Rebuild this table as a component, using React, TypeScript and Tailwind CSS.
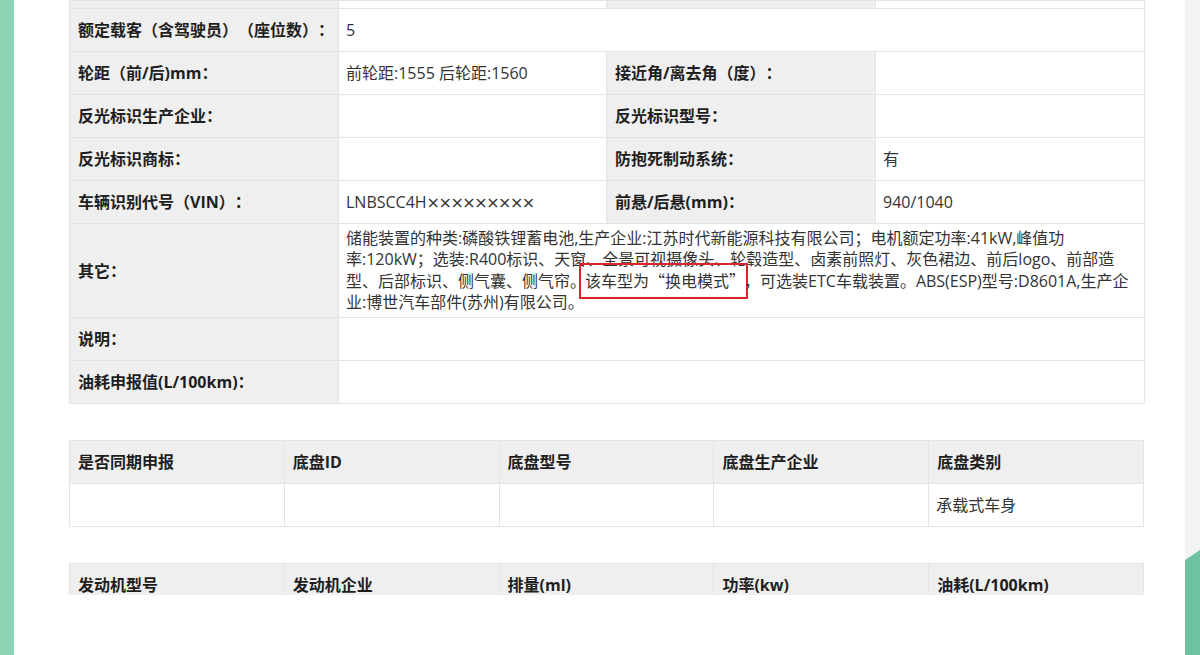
import React from "react";

const font = "font-['Open_Sans','Noto_Sans_CJK_SC',sans-serif]";
const cjk = "font-['Noto_Sans_CJK_SC',sans-serif]";

const labelCls =
  "bg-[#efefef] border border-[#e4e4e4] px-[8px] text-[16px] font-bold text-[#1e1e1e] align-middle whitespace-nowrap overflow-visible";
const valueCls = "bg-white border border-[#e4e4e4] px-[7px] text-[16px] text-[#333] align-middle whitespace-nowrap";

const Label = ({ children }: { children?: React.ReactNode }) => <td className={labelCls}>{children}</td>;
const Value = ({ children, span }: { children?: React.ReactNode; span?: number }) => (
  <td className={valueCls} colSpan={span}>
    {children}
  </td>
);

const Times = () => <span className="font-['DejaVu_Sans',sans-serif] tracking-[-1.5px]">×××××××××</span>;

const Other = () => (
  <div className="py-[4px] leading-[21px]">
    <div>储能装置的种类:磷酸铁锂蓄电池,生产企业:江苏时代新能源科技有限公司；电机额定功率:41kW,峰值功</div>
    <div>率:120kW；选装:R400标识、天窗、全景可视摄像头、轮毂造型、卤素前照灯、灰色裙边、前后logo、前部造</div>
    <div>
      型、后部标识、侧气囊、侧气帘。
      <span className="ml-[-7px] border-2 border-[#d8262b] py-[5px] pl-[4px] pr-[1px]">
        该车型为<span className={cjk}>“</span>换电模式<span className={cjk}>”</span>
      </span>
      <span className={`${cjk} ml-[-4px]`}>，</span>可选装ETC车载装置。ABS(ESP)型号:D8601A,生产企
    </div>
    <div>业:博世汽车部件(苏州)有限公司。</div>
  </div>
);

export default function App() {
  const chassisHead = ["是否同期申报", "底盘ID", "底盘型号", "底盘生产企业", "底盘类别"];
  const engineHead = ["发动机型号", "发动机企业", "排量(ml)", "功率(kw)", "油耗(L/100km)"];

  return (
    <div className={`flex h-[655px] w-[1200px] overflow-hidden bg-white ${font} [text-spacing-trim:space-all]`}>
      <div className="w-[14px] shrink-0 bg-[#8dd3b4]" />

      <div className="flex-1 pl-[55px]">
        <table className="w-[1075px] table-fixed border-collapse">
          <colgroup>
            <col className="w-[269px]" />
            <col className="w-[268px]" />
            <col className="w-[269px]" />
            <col className="w-[269px]" />
          </colgroup>
          <tbody>
            <tr className="h-[8px]">
              <Label />
              <Value />
              <Label />
              <Value />
            </tr>
            <tr className="h-[43px]">
              <Label>额定载客（含驾驶员）（座位数）：</Label>
              <Value span={3}>5</Value>
            </tr>
            <tr className="h-[43px]">
              <Label>轮距（前/后)mm：</Label>
              <Value>前轮距:1555 后轮距:1560</Value>
              <Label>接近角/离去角（度）：</Label>
              <Value />
            </tr>
            <tr className="h-[43px]">
              <Label>反光标识生产企业：</Label>
              <Value />
              <Label>反光标识型号：</Label>
              <Value />
            </tr>
            <tr className="h-[43px]">
              <Label>反光标识商标：</Label>
              <Value />
              <Label>防抱死制动系统：</Label>
              <Value>有</Value>
            </tr>
            <tr className="h-[43px]">
              <Label>车辆识别代号（VIN）：</Label>
              <Value>
                LNBSCC4H<Times />
              </Value>
              <Label>前悬/后悬(mm)：</Label>
              <Value>940/1040</Value>
            </tr>
            <tr className="h-[94px]">
              <Label>其它：</Label>
              <Value span={3}>
                <Other />
              </Value>
            </tr>
            <tr className="h-[43px]">
              <Label>说明：</Label>
              <Value span={3} />
            </tr>
            <tr className="h-[43px]">
              <Label>油耗申报值(L/100km)：</Label>
              <Value span={3} />
            </tr>
          </tbody>
        </table>

        <table className="mt-[36px] w-[1075px] table-fixed border-collapse">
          <tbody>
            <tr className="h-[43px]">
              {chassisHead.map((h) => (
                <Label key={h}>{h}</Label>
              ))}
            </tr>
            <tr className="h-[43px]">
              <Value />
              <Value />
              <Value />
              <Value />
              <Value>承载式车身</Value>
            </tr>
          </tbody>
        </table>

        <div className="mt-[36px] h-[32px] w-[1075px] overflow-hidden">
          <table className="w-[1075px] table-fixed border-collapse">
            <tbody>
              <tr className="h-[43px]">
                {engineHead.map((h) => (
                  <Label key={h}>{h}</Label>
                ))}
              </tr>
            </tbody>
          </table>
        </div>
      </div>

      <div className="flex w-[15px] shrink-0 flex-col bg-[#f3f3f3]">
        <div className="flex-1" />
        <svg width="15" height="105" viewBox="0 0 15 105" className="block">
          <polygon points="0,10 15,0 15,105 0,105" fill="#6cc3a0" />
        </svg>
      </div>
    </div>
  );
}
